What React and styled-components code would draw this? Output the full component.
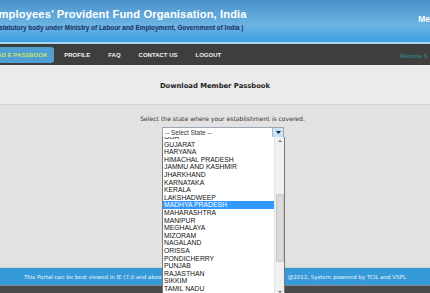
import React from 'react';
import styled, { createGlobalStyle } from 'styled-components';

const GlobalStyle = createGlobalStyle`
  html, body {
    margin: 0;
    padding: 0;
    background: #e2e2e2;
    overflow: hidden;
  }
  body {
    font-family: "Liberation Sans", Arial, sans-serif;
  }
`;

const states = [
  'GOA', 'GUJARAT', 'HARYANA', 'HIMACHAL PRADESH', 'JAMMU AND KASHMIR', 'JHARKHAND',
  'KARNATAKA', 'KERALA', 'LAKSHADWEEP', 'MADHYA PRADESH', 'MAHARASHTRA', 'MANIPUR',
  'MEGHALAYA', 'MIZORAM', 'NAGALAND', 'ORISSA', 'PONDICHERRY', 'PUNJAB', 'RAJASTHAN',
  'SIKKIM', 'TAMIL NADU'
];

const App = () => {
  return (
    <Page>
      <GlobalStyle />
      <Header>
        <Brand>
          <Title>Employees’ Provident Fund Organisation, India</Title>
          <Subtitle>A statutory body under Ministry of Labour and Employment, Government of India )</Subtitle>
        </Brand>
        <HeaderRight>Me</HeaderRight>
      </Header>
      <Nav>
        <NavLinks>
          <NavItem active>DOWNLOAD E PASSBOOK</NavItem>
          <NavItem>PROFILE</NavItem>
          <NavItem>FAQ</NavItem>
          <NavItem>CONTACT US</NavItem>
          <NavItem>LOGOUT</NavItem>
        </NavLinks>
        <Welcome>Welcome S</Welcome>
      </Nav>
      <TitleBand>
        <h2>Download Member Passbook</h2>
      </TitleBand>
      <Content>
        <Prompt>Select the state where your establishment is covered.</Prompt>
        <SelectWrap>
          <SelectBox>
            <span>-- Select State --</span>
            <SelectButton>
              <svg width="5" height="3" viewBox="0 0 5 3"><path d="M0 0h5L2.5 3z" fill="#222" /></svg>
            </SelectButton>
          </SelectBox>
          <DropList>
            <Options>
              {states.map((s) => (
                <Option key={s} selected={s === 'MADHYA PRADESH'}>{s}</Option>
              ))}
            </Options>
            <Scrollbar>
              <ArrowUp />
              <Thumb />
              <ArrowDown />
            </Scrollbar>
          </DropList>
        </SelectWrap>
      </Content>
      <Footer>
        <span>This Portal can be best viewed in IE (7.0 and above)</span>
        <span>@2012, System powered by TCIL and VSPL</span>
      </Footer>
      <BottomStrip />
    </Page>
  );
};

const Page = styled.div`
  width: 430px;
  height: 293px;
  display: flex;
  flex-direction: column;
  overflow: hidden;
`;

const Header = styled.header`
  height: 42px;
  display: flex;
  justify-content: space-between;
  align-items: flex-start;
  background: linear-gradient(#4b91c9 0%, #64abdd 45%, #6cb4e3 60%, #3c9fe0 100%);
  border-bottom: 2px solid #a6d6f2;
`;

const Brand = styled.div`
  display: flex;
  flex-direction: column;
  padding-top: 8px;
`;

const Title = styled.h1`
  margin: 0 0 0 -9px;
  font-size: 11.2px;
  font-weight: bold;
  color: #fff;
  white-space: nowrap;
  letter-spacing: 0.1px;
`;

const Subtitle = styled.p`
  margin: 4px 0 0 -7px;
  font-size: 6.4px;
  font-weight: bold;
  color: #1d2d60;
  white-space: nowrap;
`;

const HeaderRight = styled.div`
  margin-top: 14px;
  margin-right: 0;
  font-size: 8.5px;
  font-weight: bold;
  color: #fff;
`;

const Nav = styled.nav`
  height: 21px;
  display: flex;
  align-items: center;
  justify-content: space-between;
  background: #3e3e3e;
`;

const NavLinks = styled.div`
  display: flex;
  align-items: center;
`;

const NavItem = styled.div`
  height: 16px;
  display: flex;
  align-items: center;
  font-size: 6px;
  font-weight: bold;
  white-space: nowrap;
  color: ${(p) => (p.active ? '#c9e36b' : '#f2f2f2')};
  background: ${(p) => (p.active ? '#4f9fd2' : 'transparent')};
  border-radius: ${(p) => (p.active ? '0 3px 3px 0' : '0')};
  padding: ${(p) => (p.active ? '0 7px 0 0' : '0 9px')};
  margin-left: ${(p) => (p.active ? '-30px' : '0')};
  margin-right: ${(p) => (p.active ? '1px' : '0')};
  & + & {
    padding: 0 9px;
  }
`;

const Welcome = styled.div`
  width: 30px;
  overflow: hidden;
  font-size: 5.4px;
  color: #2a9a9a;
  margin-top: 3px;
  white-space: nowrap;
`;

const TitleBand = styled.section`
  height: 39px;
  display: flex;
  align-items: center;
  justify-content: center;
  background: #ebebeb;
  border-bottom: 1px solid #d2d2d2;
  h2 {
    margin: 2px 0 0 0;
    font-family: "DejaVu Sans", Verdana, sans-serif;
    font-size: 6.8px;
    font-weight: bold;
    color: #222;
  }
`;

const Content = styled.main`
  flex: 1;
  display: flex;
  flex-direction: column;
  align-items: center;
  padding-top: 10px;
  background: #e2e2e2;
`;

const Prompt = styled.p`
  margin: 0 0 0 15px;
  font-family: "DejaVu Sans", Verdana, sans-serif;
  font-size: 6.1px;
  color: #333;
`;

const SelectWrap = styled.div`
  position: relative;
  margin-top: 5px;
  margin-left: 16px;
`;

const SelectBox = styled.div`
  width: 120px;
  height: 9px;
  display: flex;
  align-items: center;
  justify-content: space-between;
  background: #fff;
  border: 1px solid #9aa7b4;
  span {
    font-size: 6.4px;
    color: #333;
    padding-left: 2px;
  }
`;

const SelectButton = styled.div`
  width: 10px;
  height: 9px;
  display: flex;
  align-items: center;
  justify-content: center;
  background: #c8e3f5;
  border-left: 1px solid #9ac0dc;
`;

const DropList = styled.div`
  position: absolute;
  top: 10px;
  left: 0;
  width: 121px;
  height: 160px;
  display: flex;
  background: #fff;
  border: 1px solid #777;
  border-top: none;
  overflow: hidden;
`;

const Options = styled.ul`
  flex: 1;
  list-style: none;
  margin: -4px 0 0 0;
  padding: 0;
`;

const Option = styled.li`
  height: 7.6px;
  line-height: 8px;
  padding-left: 1px;
  font-size: 6.8px;
  color: ${(p) => (p.selected ? '#fff' : '#111')};
  background: ${(p) => (p.selected ? '#3399ff' : 'transparent')};
  white-space: nowrap;
`;

const Scrollbar = styled.div`
  width: 9px;
  display: flex;
  flex-direction: column;
  align-items: center;
  background: #f0f0f0;
  border-left: 1px solid #e4e4e4;
`;

const ArrowUp = styled.div`
  width: 0;
  height: 0;
  margin-top: 3px;
  border-left: 2px solid transparent;
  border-right: 2px solid transparent;
  border-bottom: 2px solid #777;
`;

const Thumb = styled.div`
  width: 6px;
  height: 66px;
  margin-top: 52px;
  background: #dadada;
  border: 1px solid #c6c6c6;
  border-radius: 1px;
`;

const ArrowDown = styled.div`
  width: 0;
  height: 0;
  margin-top: auto;
  margin-bottom: 4px;
  border-left: 2px solid transparent;
  border-right: 2px solid transparent;
  border-top: 2px solid #777;
`;

const Footer = styled.footer`
  height: 17px;
  display: flex;
  align-items: center;
  justify-content: space-between;
  padding: 0 24px;
  margin-top: 1px;
  background: #369ad8;
  border-top: 1px solid #d0d0d0;
  span {
    font-family: "DejaVu Sans", Verdana, sans-serif;
    font-size: 5.5px;
    color: #e8f4fb;
    white-space: nowrap;
  }
`;

const BottomStrip = styled.div`
  height: 7px;
  background: #4a4a4a;
  border-top: 1px solid #8a8a8a;
`;

export default App;
